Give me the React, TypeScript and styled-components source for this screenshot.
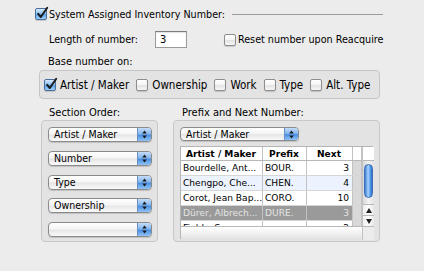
import React from "react";
import styled, { createGlobalStyle } from "styled-components";

const Global = createGlobalStyle`
  html, body { margin: 0; padding: 0; background: #ececec; }
  body {
    font-family: "DejaVu Sans Condensed", "DejaVu Sans", sans-serif;
    font-stretch: condensed;
    color: #000;
  }
  * { box-sizing: border-box; }
`;

const Window = styled.div`
  width: 424px;
  height: 271px;
  background: #ececec;
  padding-top: 7px;
  overflow: hidden;
  font-size: 11px;
`;

const TitleRow = styled.div`
  display: flex;
  align-items: center;
  height: 14px;
  margin-left: 35px;
  width: 348px;
  gap: 2px;
  font-size: 10.7px;
`;

const Rule = styled.div`
  flex: 1;
  height: 1px;
  margin-left: 5px;
  background: #9c9c9c;
`;

const Box = styled.span<{ $checked?: boolean }>`
  position: relative;
  flex: none;
  width: 12px;
  height: 12px;
  border-radius: 2px;
  border: 1px solid ${(p) => (p.$checked ? "#4b6f9c" : "#8d8d8d")};
  background: ${(p) =>
    p.$checked
      ? "linear-gradient(#d6ebff 0%, #8ec2f4 45%, #5aa2ea 55%, #9fd0fb 100%)"
      : "linear-gradient(#ffffff 0%, #f4f4f4 50%, #e4e4e4 55%, #f6f6f6 100%)"};
  box-shadow: 0 1px 1px rgba(0, 0, 0, 0.15);
  svg {
    position: absolute;
    left: 0px;
    top: -3px;
  }
`;

const Check = ({ checked }: { checked?: boolean }) => (
  <Box $checked={checked}>
    {checked && (
      <svg width="13" height="14" viewBox="0 0 13 14">
        <path d="M2.2 7.8 L4.8 11 L11.2 1.8" fill="none" stroke="#1b1b1b" strokeWidth="2" strokeLinecap="round" strokeLinejoin="round" />
      </svg>
    )}
  </Box>
);

const CheckItem = styled.label<{ $gap?: number }>`
  display: flex;
  align-items: center;
  gap: ${(p) => p.$gap ?? 4}px;
  white-space: nowrap;
`;

const LengthRow = styled.div`
  display: flex;
  align-items: center;
  height: 17px;
  margin-top: 10px;
  margin-left: 49px;
  font-size: 10.7px;
`;

const FieldLabel = styled.span<{ $w?: number }>`
  width: ${(p) => (p.$w ? `${p.$w}px` : "auto")};
  white-space: nowrap;
`;

const NumberInput = styled.div`
  width: 32px;
  height: 17px;
  background: #fff;
  border: 1px solid #9a9a9a;
  border-top-color: #7c7c7c;
  box-shadow: inset 0 1px 1px rgba(0, 0, 0, 0.12);
  padding: 1px 0 0 4px;
  font-size: 11px;
  margin-right: 37px;
`;

const SubLabel = styled.div`
  margin-top: 7px;
  margin-left: 48px;
  height: 14px;
  line-height: 14px;
`;

const GroupBox = styled.div`
  display: flex;
  align-items: center;
  gap: 7px;
  margin-top: 1px;
  margin-left: 39px;
  width: 341px;
  height: 29px;
  padding-left: 4px;
  border: 1px solid #c5c5c5;
  border-radius: 4px;
  background: #e3e3e3;
  font-size: 11.5px;
`;

const Columns = styled.div`
  display: flex;
  gap: 15px;
  margin-left: 41px;
  margin-top: 6px;
`;

const Column = styled.div`
  display: flex;
  flex-direction: column;
`;

const ColTitle = styled.div<{ $pad: number }>`
  height: 15px;
  line-height: 15px;
  padding-left: ${(p) => p.$pad}px;
`;

const Panel = styled.div<{ $w: number }>`
  width: ${(p) => p.$w}px;
  height: 122px;
  border: 1px solid #c8c8c8;
  border-radius: 4px;
  background: #e3e3e3;
  display: flex;
  flex-direction: column;
  padding: 6px 0 0 6px;
`;

const PopupList = styled.div`
  display: flex;
  flex-direction: column;
  gap: 8.75px;
`;

const PopupBox = styled.div<{ $w: number; $h: number }>`
  display: flex;
  width: ${(p) => p.$w}px;
  height: ${(p) => p.$h}px;
  border: 1px solid #8a8a8a;
  border-radius: 4px;
  background: linear-gradient(#ffffff 0%, #f5f5f5 45%, #e6e6e6 55%, #fafafa 100%);
  box-shadow: 0 1px 1px rgba(0, 0, 0, 0.15);
  overflow: hidden;
  font-size: 10.5px;
`;

const PopupText = styled.span`
  flex: 1;
  padding-left: 5px;
  line-height: 12px;
  white-space: nowrap;
  overflow: hidden;
`;

const Stepper = styled.span`
  flex: none;
  width: 14px;
  display: flex;
  align-items: center;
  justify-content: center;
  border-left: 1px solid #6a8fc4;
  background: linear-gradient(#c3dcfa 0%, #86b6ee 45%, #4b8fe2 55%, #8fc3f7 100%);
`;

const Popup = ({ label, w, h = 15 }: { label: string; w: number; h?: number }) => (
  <PopupBox $w={w} $h={h}>
    <PopupText>{label}</PopupText>
    <Stepper>
      <svg width="5" height="9" viewBox="0 0 5 9">
        <path d="M2.5 0.5 L4.8 3.5 L0.2 3.5 Z M2.5 8.5 L4.8 5.5 L0.2 5.5 Z" fill="#1a1a1a" />
      </svg>
    </Stepper>
  </PopupBox>
);

const TableFrame = styled.div`
  margin-top: 5px;
  width: 193px;
  height: 93px;
  display: grid;
  grid-template-columns: 181px 12px;
  grid-template-rows: 79px 14px;
  background: #fff;
  border: 1px solid #b5b5b5;
  font-family: "DejaVu Sans", sans-serif;
  font-stretch: normal;
  font-size: 9.1px;
`;

const Body = styled.div`
  overflow: hidden;
`;

const Row = styled.div<{ $bg: string; $fg?: string; $head?: boolean }>`
  display: grid;
  grid-template-columns: 82px 44px 46px 9px;
  height: ${(p) => (p.$head ? 14 : 15)}px;
  background: ${(p) => p.$bg};
  color: ${(p) => p.$fg ?? "#000"};
  font-weight: ${(p) => (p.$head ? "bold" : "normal")};
  border-bottom: 1px solid ${(p) => (p.$head ? "#b8b8b8" : "#d6d6d6")};
`;

const Cell = styled.div<{ $align?: string; $fill?: string }>`
  padding: 0 3px 0 2px;
  line-height: 14px;
  text-align: ${(p) => p.$align ?? "left"};
  white-space: nowrap;
  overflow: hidden;
  border-right: 1px solid #c2c2c2;
  background: ${(p) => p.$fill ?? "transparent"};
`;

const VScroll = styled.div`
  display: flex;
  flex-direction: column;
  border-left: 1px solid #c2c2c2;
`;

const ScrollHead = styled.div`
  height: 14px;
  flex: none;
  border-bottom: 1px solid #b8b8b8;
  background: #fff;
`;

const Track = styled.div`
  flex: 1;
  background: linear-gradient(90deg, #d8d8d8, #f4f4f4 50%, #e2e2e2);
  display: flex;
  flex-direction: column;
`;

const Thumb = styled.div`
  margin: 3px 1px 0 1px;
  height: 34px;
  border-radius: 5px;
  border: 1px solid #3a6db3;
  background: linear-gradient(90deg, #3b7fd8 0%, #a9d2fb 45%, #5ea3ee 70%, #2f6fc9 100%);
`;

const Arrows = styled.div`
  margin-top: auto;
  display: flex;
  flex-direction: column;
`;

const ArrowBtn = styled.div`
  height: 11px;
  display: flex;
  align-items: center;
  justify-content: center;
  border-top: 1px solid #b8b8b8;
  background: linear-gradient(90deg, #eeeeee, #fdfdfd 50%, #e8e8e8);
`;

const HScroll = styled.div`
  border-top: 1px solid #b8b8b8;
  background: linear-gradient(#ffffff, #f0f0f0 50%, #e0e0e0);
`;

const Corner = styled.div`
  border-top: 1px solid #b8b8b8;
  border-left: 1px solid #c2c2c2;
  background: #ececec;
`;

const rows = [
  { name: "Bourdelle, Ant...", prefix: "BOUR.", next: "3", bg: "#ffffff" },
  { name: "Chengpo, Che...", prefix: "CHEN.", next: "4", bg: "#edf3fe" },
  { name: "Corot, Jean Bap...", prefix: "CORO.", next: "10", bg: "#ffffff" },
  { name: "Dürer, Albrech...", prefix: "DURE.", next: "3", bg: "#9a9a9a", fg: "#e4e4e4" },
  { name: "Fields, S...", prefix: "", next: "2", bg: "#ffffff" },
];

export default function App() {
  return (
    <Window>
      <Global />
      <TitleRow>
        <CheckItem $gap={2}>
          <Check checked />
          <span>System Assigned Inventory Number:</span>
        </CheckItem>
        <Rule />
      </TitleRow>

      <LengthRow>
        <FieldLabel $w={106}>Length of number:</FieldLabel>
        <NumberInput>3</NumberInput>
        <CheckItem $gap={2}>
          <Check />
          <span>Reset number upon Reacquire</span>
        </CheckItem>
      </LengthRow>

      <SubLabel>Base number on:</SubLabel>
      <GroupBox>
        <CheckItem>
          <Check checked />
          <span>Artist / Maker</span>
        </CheckItem>
        <CheckItem>
          <Check />
          <span>Ownership</span>
        </CheckItem>
        <CheckItem>
          <Check />
          <span>Work</span>
        </CheckItem>
        <CheckItem>
          <Check />
          <span>Type</span>
        </CheckItem>
        <CheckItem>
          <Check />
          <span>Alt. Type</span>
        </CheckItem>
      </GroupBox>

      <Columns>
        <Column>
          <ColTitle $pad={8}>Section Order:</ColTitle>
          <Panel $w={117}>
            <PopupList>
              <Popup label="Artist / Maker" w={104} />
              <Popup label="Number" w={104} />
              <Popup label="Type" w={104} />
              <Popup label="Ownership" w={104} />
              <Popup label="" w={104} />
            </PopupList>
          </Panel>
        </Column>
        <Column>
          <ColTitle $pad={9}>Prefix and Next Number:</ColTitle>
          <Panel $w={207}>
            <Popup label="Artist / Maker" w={119} h={14} />
            <TableFrame>
              <Body>
                <Row $bg="#ffffff" $head>
                  <Cell $align="center">Artist / Maker</Cell>
                  <Cell $align="center">Prefix</Cell>
                  <Cell $align="center">Next</Cell>
                  <Cell />
                </Row>
                {rows.map((r) => (
                  <Row key={r.name} $bg={r.bg} $fg={r.fg}>
                    <Cell>{r.name}</Cell>
                    <Cell>{r.prefix}</Cell>
                    <Cell $align="right">{r.next}</Cell>
                    <Cell $fill="#d9d9d9" />
                  </Row>
                ))}
              </Body>
              <VScroll>
                <ScrollHead />
                <Track>
                  <Thumb />
                  <Arrows>
                    <ArrowBtn>
                      <svg width="6" height="5" viewBox="0 0 6 5">
                        <path d="M3 0 L6 5 L0 5 Z" fill="#222" />
                      </svg>
                    </ArrowBtn>
                    <ArrowBtn>
                      <svg width="6" height="5" viewBox="0 0 6 5">
                        <path d="M0 0 L6 0 L3 5 Z" fill="#222" />
                      </svg>
                    </ArrowBtn>
                  </Arrows>
                </Track>
              </VScroll>
              <HScroll />
              <Corner />
            </TableFrame>
          </Panel>
        </Column>
      </Columns>
    </Window>
  );
}
